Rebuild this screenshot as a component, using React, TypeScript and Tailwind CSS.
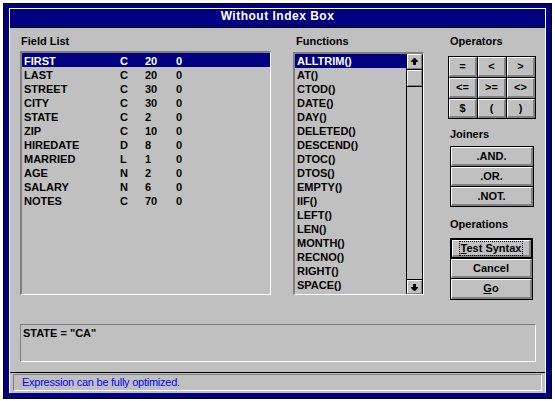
import React from 'react'

// field name, type, width, decimals
const fields: [string, string, string, string][] = [
  ['FIRST', 'C', '20', '0'],
  ['LAST', 'C', '20', '0'],
  ['STREET', 'C', '30', '0'],
  ['CITY', 'C', '30', '0'],
  ['STATE', 'C', '2', '0'],
  ['ZIP', 'C', '10', '0'],
  ['HIREDATE', 'D', '8', '0'],
  ['MARRIED', 'L', '1', '0'],
  ['AGE', 'N', '2', '0'],
  ['SALARY', 'N', '6', '0'],
  ['NOTES', 'C', '70', '0'],
]

const functions = [
  'ALLTRIM()', 'AT()', 'CTOD()', 'DATE()', 'DAY()', 'DELETED()', 'DESCEND()', 'DTOC()', 'DTOS()',
  'EMPTY()', 'IIF()', 'LEFT()', 'LEN()', 'MONTH()', 'RECNO()', 'RIGHT()', 'SPACE()',
]

const operators = ['=', '<', '>', '<=', '>=', '<>', '$', '(', ')']

const raised =
  'bg-[#c0c0c0] border-t border-l border-b-2 border-r-2 border-t-white border-l-white border-b-[#808080] border-r-[#808080]'
const raisedThin =
  'bg-[#c0c0c0] border border-t-white border-l-white border-b-[#808080] border-r-[#808080]'

const Arrow = ({ down }: { down?: boolean }) => (
  <svg width="7" height="7" viewBox="0 0 7 7" className={down ? 'rotate-180' : ''}>
    <polygon points="3,0 4,0 7,3 7,4 5,4 5,7 2,7 2,4 0,4 0,3" fill="#000" />
  </svg>
)

const Label = ({ children, className = '' }: { children: React.ReactNode; className?: string }) => (
  <div className={`h-[14px] leading-[14px] font-bold text-[11px] text-black ${className}`}>{children}</div>
)

const App = () => {
  return (
    <div className="min-h-screen bg-white pt-[3px] pl-[3px] font-['Liberation_Sans',Arial,sans-serif]">
      <div className="w-[549px] h-[396px] border border-black bg-[#000080] pt-[4px] px-[5px] pb-[5px]">
        <div className="h-[385px] border-t border-x border-white bg-[#c0c0c0] flex flex-col">
          {/* title bar */}
          <div className="h-[19px] bg-[#000080] border-b border-black text-center text-white font-bold text-[12px] tracking-[0.5px] leading-[15px]">
            Without Index Box
          </div>

          {/* main area */}
          <div className="h-[344px] pl-[10px] pt-[6px]">
            <div className="flex">
              {/* field list */}
              <div className="w-[251px]">
                <Label className="pl-[1px]">Field List</Label>
                <div className="mt-[3px] h-[244px] border-t-2 border-l-2 border-b border-r border-t-[#808080] border-l-[#808080] border-b-white border-r-white">
                  {fields.map((f, i) => (
                    <div
                      key={f[0]}
                      className={`flex h-[14px] leading-[16px] text-[11px] font-bold pl-[2px] ${
                        i === 0 ? 'bg-[#000080] text-white' : 'text-black'
                      }`}
                    >
                      <span className="w-[96px]">{f[0]}</span>
                      <span className="w-[25px]">{f[1]}</span>
                      <span className="w-[31px]">{f[2]}</span>
                      <span>{f[3]}</span>
                    </div>
                  ))}
                </div>
              </div>

              {/* functions */}
              <div className="w-[131px] ml-[22px]">
                <Label className="pl-[3px]">Functions</Label>
                <div className="mt-[4px] h-[243px] flex border-t-2 border-l-2 border-b border-r border-t-[#808080] border-l-[#808080] border-b-white border-r-white">
                  <div className="w-[111px]">
                    {functions.map((fn, i) => (
                      <div
                        key={fn}
                        className={`h-[14px] leading-[15px] text-[11px] font-bold pl-[2px] ${
                          i === 0 ? 'bg-[#000080] text-white' : 'text-black'
                        }`}
                      >
                        {fn}
                      </div>
                    ))}
                  </div>
                  <div className="w-[17px] flex flex-col border-x border-black">
                    <div className="h-[16px] border-b border-black">
                      <div className={`h-full flex items-center justify-center ${raisedThin}`}>
                        <Arrow />
                      </div>
                    </div>
                    <div className="h-[17px] border-b border-black">
                      <div className={`h-full ${raisedThin}`} />
                    </div>
                    <div className="flex-1" />
                    <div className="h-[15px] border-t border-black">
                      <div className={`h-full flex items-center justify-center ${raisedThin}`}>
                        <Arrow down />
                      </div>
                    </div>
                  </div>
                </div>
              </div>

              {/* right column */}
              <div className="w-[88px] ml-[24px] flex flex-col">
                <Label className="pl-[2px]">Operators</Label>
                <div className="mt-[8px] grid grid-cols-[28px_28px_28px] grid-rows-[20px_20px_19px] gap-px bg-black p-px">
                  {operators.map(op => (
                    <div key={op} className={`flex items-center justify-center text-[11px] font-bold text-black ${raised}`}>
                      {op}
                    </div>
                  ))}
                </div>

                <Label className="mt-[8px] pl-[2px]">Joiners</Label>
                <div className="mt-[5px] ml-[2px] w-[84px] flex flex-col gap-px bg-black p-px">
                  {['.AND.', '.OR.', '.NOT.'].map(j => (
                    <div key={j} className={`h-[19px] flex items-center justify-center text-[11px] font-bold text-black ${raised}`}>
                      {j}
                    </div>
                  ))}
                </div>

                <Label className="mt-[10px] pl-[2px]">Operations</Label>
                <div className="mt-[7px] ml-[2px] w-[83px] flex flex-col gap-px bg-black p-px">
                  <div className="h-[19px] border border-black">
                    <div className={`h-full flex items-center justify-center text-[11px] font-bold text-black ${raised}`}>
                      <span className="border border-dotted border-black px-[1px] leading-[13px]">
                        <span className="underline">T</span>est Syntax
                      </span>
                    </div>
                  </div>
                  <div className={`h-[19px] flex items-center justify-center text-[11px] font-bold text-black ${raised}`}>
                    Cancel
                  </div>
                  <div className={`h-[20px] flex items-center justify-center text-[11px] font-bold text-black ${raised}`}>
                    <span className="underline">G</span>o
                  </div>
                </div>
              </div>
            </div>

            {/* expression */}
            <div className="mt-[24px] w-[516px] h-[38px] border border-t-[#808080] border-l-[#808080] border-b-white border-r-white pl-[2px] pt-[1px]">
              <div className="leading-[14px] text-[11px] font-bold text-black">STATE = "CA"</div>
            </div>
          </div>

          {/* status bar */}
          <div className="h-[21px] border-t border-black pt-[1px] px-[3px]">
            <div className="h-[17px] border border-t-[#808080] border-l-[#808080] border-b-white border-r-white pl-[8px] text-[11px] leading-[14px] tracking-[-0.25px] text-[#0000ff]">
              Expression can be fully optimized.
            </div>
          </div>
        </div>
      </div>
    </div>
  )
}

export default App
